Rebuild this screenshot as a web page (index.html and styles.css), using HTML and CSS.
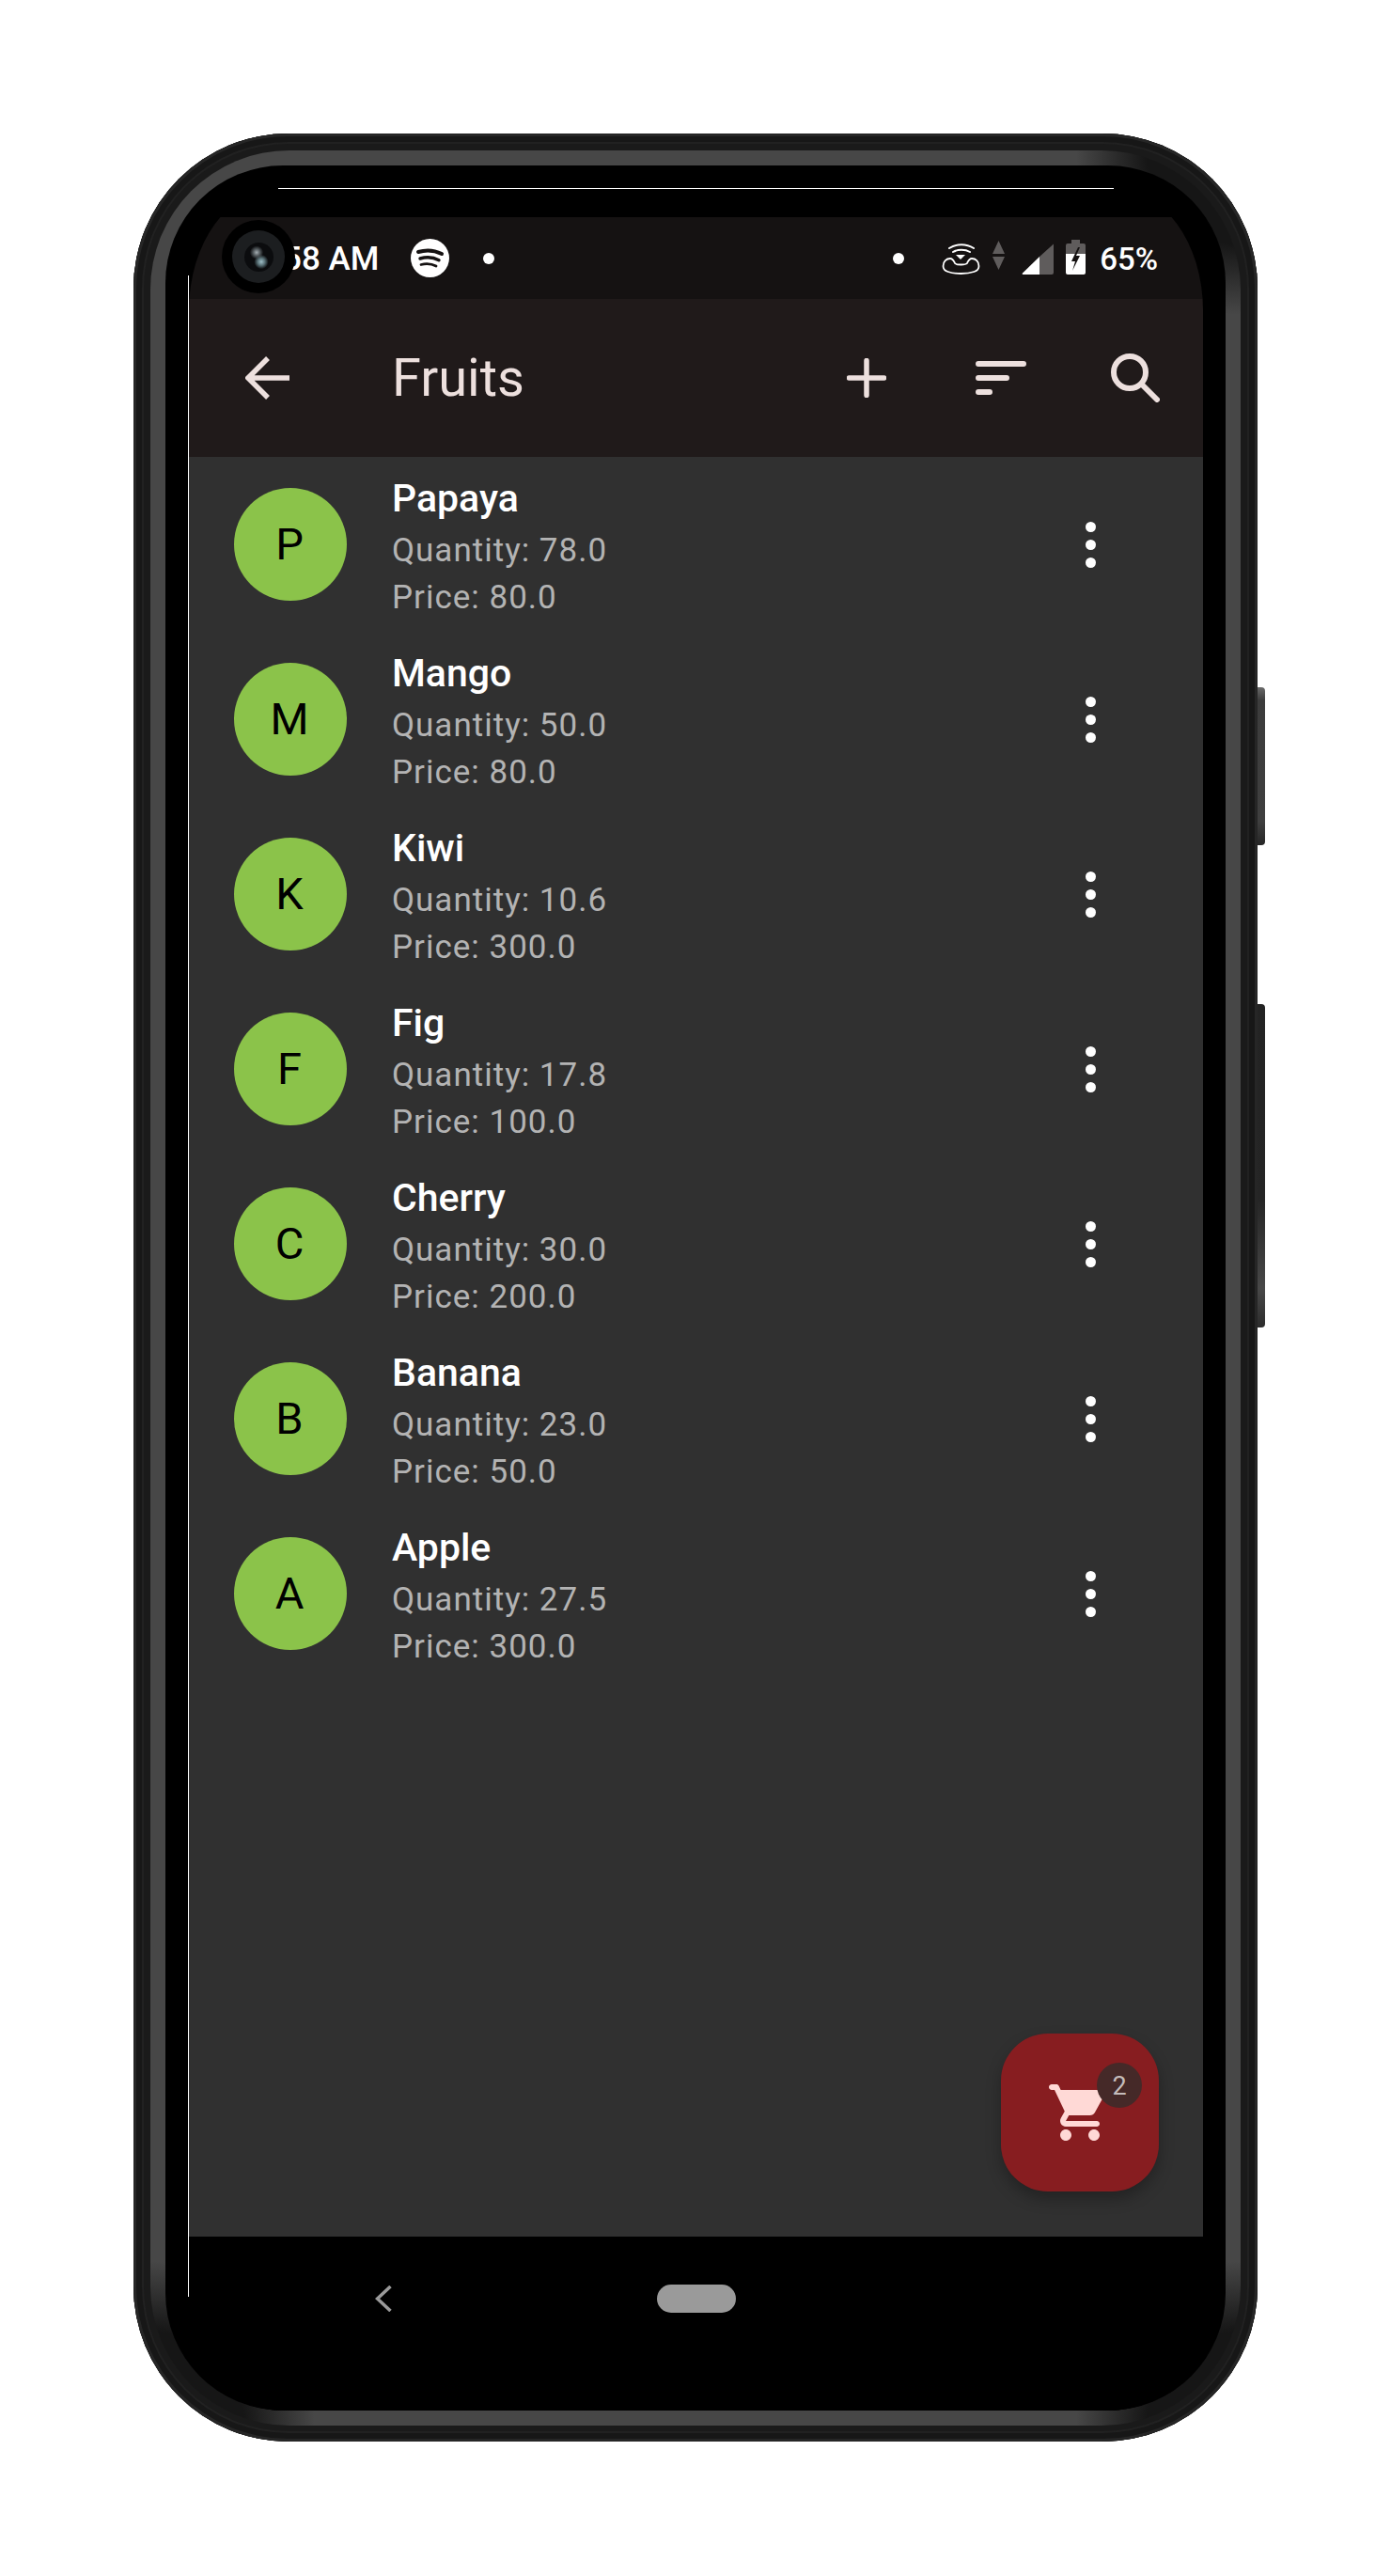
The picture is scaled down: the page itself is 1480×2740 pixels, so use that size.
FILE: index.html
```html
<!DOCTYPE html>
<html lang="en">
<head>
    <meta charset="UTF-8">
    <title>Fruits</title>
    <link rel="stylesheet" href="styles.css">
</head>
<body>

    <div class="phone">
        <div class="side-btn side-btn-power"></div>
        <div class="side-btn side-btn-volume"></div>

        <div class="bevel">
            <div class="bezel">
                <div class="edge-line edge-top"></div>
                <div class="edge-line edge-left"></div>

                <div class="screen">
                    <div class="status-bar">
                        <span class="status-time">8:58 AM</span>
                        <svg class="spotify" width="41" height="41" viewBox="0 0 41 41">
                            <circle cx="20.5" cy="20.5" r="20.5" fill="#fff"/>
                            <path d="M8 14c8-2.500 17-2 25 2" stroke="#151212" stroke-width="4" stroke-linecap="round" fill="none"/>
                            <path d="M10 21c7-2 14-1.500 20 1.800" stroke="#151212" stroke-width="3.400" stroke-linecap="round" fill="none"/>
                            <path d="M11 27.500c6-1.500 11-1 16 1.600" stroke="#151212" stroke-width="2.800" stroke-linecap="round" fill="none"/>
                        </svg>
                        <span class="status-dot"></span>
                        <span class="status-dot status-dot-right"></span>
                        <svg class="wifi-call" width="41" height="36" viewBox="0 0 41 36">
                            <path d="M8 7c8-5 18-5 26 0M12 11c5-3 13-3 18 0" stroke="#fff" stroke-width="2" stroke-linecap="round" fill="none"/>
                            <path d="M15 14h10l-5 5z" fill="#fff"/>
                            <path d="M1.500 26c0-5 3.500-8 7.500-8 3 0 4 3 5 5 1 1.200 3.500 1.500 6.500 1.500s5.500-.3 6.500-1.500c1-2 2-5 5-5 4 0 7.500 3 7.500 8 0 3-2 5-5 6-3 1-8 2-14 2s-11-1-14-2c-3-1-5-3-5-6z" stroke="#fff" stroke-width="1.800" fill="none"/>
                        </svg>
                        <svg class="net-arrows" width="13" height="31" viewBox="0 0 13 31">
                            <path d="M6.500 0L13 14H0zM0 17h13L6.500 31z" fill="#5f5c5c"/>
                        </svg>
                        <svg class="signal" width="34" height="34" viewBox="0 0 34 34">
                            <path d="M34 1.500V32q0 2-2 2H19V15z" fill="#5f5c5c"/>
                            <path d="M19 15V34H1.500q-1.500 0-.5-1.500z" fill="#fff"/>
                        </svg>
                        <svg class="battery" width="21" height="37" viewBox="0 0 21 37">
                            <path d="M6 0h9v4h4q2 0 2 2v10H0V6q0-2 2-2h4z" fill="#5f5c5c"/>
                            <path d="M0 15h21v20q0 2-2 2H2q-2 0-2-2z" fill="#fff"/>
                            <path d="M13 8L6 23h4L7 33l8-16h-4l4-9z" fill="#151212"/>
                        </svg>
                        <span class="status-percent">65%</span>
                    </div>

                    <div class="app-bar">
                        <div class="bar-slot bar-slot-back">
                            <svg width="49" height="48" viewBox="0 0 49 48">
                                <path d="M47 24H4M24 3L3 24l21 21" stroke="#ede0de" stroke-width="5.500" fill="none"/>
                            </svg>
                        </div>
                        <div class="app-title">Fruits</div>
                        <div class="bar-slot">
                            <svg width="42" height="42" viewBox="0 0 42 42">
                                <path d="M21 2.500v37M2.500 21h37" stroke="#ede0de" stroke-width="5.500" stroke-linecap="round" fill="none"/>
                            </svg>
                        </div>
                        <div class="bar-slot">
                            <svg width="54" height="36" viewBox="0 0 54 36">
                                <path d="M3 3h48M3 18h30M3 33h12" stroke="#ede0de" stroke-width="6" stroke-linecap="round" fill="none"/>
                            </svg>
                        </div>
                        <div class="bar-slot">
                            <svg width="52" height="52" viewBox="0 0 52 52">
                                <circle cx="20" cy="20" r="17" stroke="#ede0de" stroke-width="6" fill="none"/>
                                <path d="M33 33l16 16" stroke="#ede0de" stroke-width="6" stroke-linecap="round"/>
                            </svg>
                        </div>
                    </div>

                    <div class="fruit-list">
                        <div class="fruit-row">
                            <div class="avatar">P</div>
                            <div class="fruit-info">
                                <div class="fruit-name">Papaya</div>
                                <div class="fruit-meta">Quantity: 78.0</div>
                                <div class="fruit-meta">Price: 80.0</div>
                            </div>
                            <div class="more"><span></span><span></span><span></span></div>
                        </div>
                        <div class="fruit-row">
                            <div class="avatar">M</div>
                            <div class="fruit-info">
                                <div class="fruit-name">Mango</div>
                                <div class="fruit-meta">Quantity: 50.0</div>
                                <div class="fruit-meta">Price: 80.0</div>
                            </div>
                            <div class="more"><span></span><span></span><span></span></div>
                        </div>
                        <div class="fruit-row">
                            <div class="avatar">K</div>
                            <div class="fruit-info">
                                <div class="fruit-name">Kiwi</div>
                                <div class="fruit-meta">Quantity: 10.6</div>
                                <div class="fruit-meta">Price: 300.0</div>
                            </div>
                            <div class="more"><span></span><span></span><span></span></div>
                        </div>
                        <div class="fruit-row">
                            <div class="avatar">F</div>
                            <div class="fruit-info">
                                <div class="fruit-name">Fig</div>
                                <div class="fruit-meta">Quantity: 17.8</div>
                                <div class="fruit-meta">Price: 100.0</div>
                            </div>
                            <div class="more"><span></span><span></span><span></span></div>
                        </div>
                        <div class="fruit-row">
                            <div class="avatar">C</div>
                            <div class="fruit-info">
                                <div class="fruit-name">Cherry</div>
                                <div class="fruit-meta">Quantity: 30.0</div>
                                <div class="fruit-meta">Price: 200.0</div>
                            </div>
                            <div class="more"><span></span><span></span><span></span></div>
                        </div>
                        <div class="fruit-row">
                            <div class="avatar">B</div>
                            <div class="fruit-info">
                                <div class="fruit-name">Banana</div>
                                <div class="fruit-meta">Quantity: 23.0</div>
                                <div class="fruit-meta">Price: 50.0</div>
                            </div>
                            <div class="more"><span></span><span></span><span></span></div>
                        </div>
                        <div class="fruit-row">
                            <div class="avatar">A</div>
                            <div class="fruit-info">
                                <div class="fruit-name">Apple</div>
                                <div class="fruit-meta">Quantity: 27.5</div>
                                <div class="fruit-meta">Price: 300.0</div>
                            </div>
                            <div class="more"><span></span><span></span><span></span></div>
                        </div>

                        <div class="cart-fab">
                            <svg width="72" height="72" viewBox="0 0 24 24">
                                <path fill="#ffd9d6" d="M7 18c-1.100 0-1.990.9-1.990 2S5.900 22 7 22s2-.9 2-2-.9-2-2-2zM1 3c0 .55.45 1 1 1h1l3.600 7.590-1.350 2.440C4.520 15.370 5.480 17 7 17h11c.55 0 1-.45 1-1s-.45-1-1-1H7l1.100-2h7.450c.75 0 1.410-.41 1.750-1.030l3.580-6.490c.37-.66-.11-1.480-.87-1.480H5.210l-.67-1.430c-.16-.35-.52-.57-.9-.57H2c-.55 0-1 .45-1 1zm16 15c-1.100 0-1.990.9-1.990 2s.89 2 1.990 2 2-.9 2-2-.9-2-2-2z"/>
                            </svg>
                            <span class="cart-badge">2</span>
                        </div>
                    </div>

                    <div class="nav-bar">
                        <svg class="nav-back" width="18" height="28" viewBox="0 0 18 28">
                            <path d="M16.500 1L2.500 14l14 13" stroke="#9a9a9a" stroke-width="3.500" fill="none"/>
                        </svg>
                        <div class="nav-pill"></div>
                    </div>
                </div>
            </div>
        </div>

        <div class="camera"><div class="lens"><div class="lens-core"></div></div></div>
    </div>

</body>
</html>
```
FILE: styles.css
```css
body {
    margin: 0;
    min-height: 2740px;
    background-color: #ffffff;
    font-family: Roboto, "Liberation Sans", sans-serif;
}

/* phone body, three nested rings */
.phone {
    position: relative;
    box-sizing: border-box;
    width: 1196px;
    margin: 142px 0 0 142px;
    padding: 18px 18px 17px;
    background-color: #1a1a1a;
    border-radius: 165px;
    box-shadow: inset 0 0 0 3px #262626, inset 0 0 0 9px #171717, inset 0 0 0 11px #212121;
}
.bevel {
    padding: 16px;
    background:
        radial-gradient(circle at 100% 0, #161616 100px, transparent 175px),
        radial-gradient(circle at 0 100%, #161616 100px, transparent 175px),
        radial-gradient(circle at 100% 100%, #161616 100px, transparent 175px),
        #474747;
    border-radius: 148px;
}
.bezel {
    position: relative;
    padding: 24px 24px 0 25px;
    background-color: #000000;
    border-radius: 125px;
}
.edge-line {
    position: absolute;
    background-color: #ffffff;
}
.edge-top {
    top: 24px;
    left: 120px;
    width: 889px;
    height: 1px;
}
.edge-left {
    top: 117px;
    left: 24px;
    width: 1px;
    height: 2150px;
}
.side-btn {
    position: absolute;
    left: 100%;
    width: 8px;
    border-radius: 0 4px 4px 0;
}
.side-btn-power {
    top: 589px;
    height: 168px;
    background: linear-gradient(#6a6a6a 0, #3c3c3c 14px, #3f3f3f 85%, #262626 100%);
}
.side-btn-volume {
    top: 926px;
    height: 344px;
    background: linear-gradient(#232323 0, #252525 60%, #484848 88%, #2c2c2c 100%);
}

/* hole punch */
.camera {
    position: absolute;
    top: 92px;
    left: 94px;
    display: flex;
    justify-content: center;
    align-items: center;
    width: 78px;
    height: 78px;
    background-color: #000000;
    border-radius: 50%;
}
.lens {
    display: flex;
    justify-content: center;
    align-items: center;
    width: 56px;
    height: 56px;
    background-color: #1c1e20;
    border-radius: 50%;
}
.lens-core {
    width: 31px;
    height: 31px;
    border-radius: 50%;
    background:
        radial-gradient(circle at 42% 34%, #a5aeb2 0, #596064 12%, transparent 26%),
        radial-gradient(circle at 58% 66%, #9fc0c8 0, #5a7278 14%, transparent 28%),
        #0b0c0e;
}

.screen {
    display: flex;
    flex-direction: column;
    padding-top: 31px;
    background-color: #000000;
    border-radius: 95px 95px 100px 100px / 130px 130px 100px 100px;
    overflow: hidden;
}

.status-bar {
    display: flex;
    align-items: center;
    height: 87px;
    padding: 0 48px 0 71px;
    background-color: #151212;
    color: #ffffff;
}
.status-time {
    padding-top: 2px;
    font-size: 35px;
    font-weight: 500;
    white-space: nowrap;
}
.spotify {
    margin-left: 34px;
}
.status-dot {
    width: 12px;
    height: 12px;
    margin-left: 36px;
    background-color: #ffffff;
    border-radius: 50%;
}
.status-dot-right {
    margin-left: auto;
}
.wifi-call {
    margin-left: 40px;
}
.net-arrows {
    margin-left: 13px;
    margin-top: -6px;
}
.signal {
    margin-left: 18px;
}
.battery {
    margin-left: 13px;
    margin-top: -2px;
}
.status-percent {
    margin-left: 15px;
    padding-top: 2px;
    font-size: 33px;
    font-weight: 500;
}

.app-bar {
    display: flex;
    align-items: center;
    height: 168px;
    padding: 0 1px 0 12px;
    background-color: #201a1a;
}
.bar-slot {
    display: flex;
    justify-content: center;
    align-items: center;
    width: 143px;
    flex: none;
}
.bar-slot-back {
    width: 144px;
}
.app-title {
    flex: 1;
    margin-left: 60px;
    color: #ede0de;
    font-size: 56px;
}

.fruit-list {
    position: relative;
    height: 1893px;
    background-color: #303030;
}
.fruit-row {
    display: flex;
    align-items: center;
    height: 186px;
    padding: 0 108px 0 48px;
}
.avatar {
    display: flex;
    justify-content: center;
    align-items: center;
    flex: none;
    box-sizing: border-box;
    width: 120px;
    height: 120px;
    padding: 0 2px 2px 0;
    background-color: #8bc34a;
    border-radius: 50%;
    color: #000000;
    font-size: 47px;
}
.fruit-info {
    flex: 1;
    margin-left: 48px;
    padding-top: 3px;
}
.fruit-name {
    color: #ffffff;
    font-size: 41px;
    font-weight: 500;
    line-height: 61px;
}
.fruit-meta {
    color: #b3b3b3;
    font-size: 35px;
    letter-spacing: 1px;
    line-height: 50px;
}
.more {
    display: flex;
    flex-direction: column;
    align-items: center;
    gap: 8px;
    width: 24px;
}
.more span {
    width: 11px;
    height: 11px;
    background-color: #ffffff;
    border-radius: 50%;
}

.cart-fab {
    position: absolute;
    right: 47px;
    bottom: 48px;
    display: flex;
    justify-content: center;
    align-items: center;
    width: 168px;
    height: 168px;
    background-color: #871d20;
    border-radius: 50px;
    box-shadow: 0 8px 16px rgba(0, 0, 0, 0.28);
}
.cart-badge {
    position: absolute;
    top: 31px;
    right: 18px;
    width: 48px;
    height: 48px;
    background-color: #452928;
    border-radius: 50%;
    color: #c4bcbb;
    font-size: 27px;
    line-height: 50px;
    text-align: center;
}

.nav-bar {
    display: flex;
    align-items: center;
    height: 185px;
    padding: 0 0 0 198px;
    box-sizing: border-box;
    background-color: #000000;
}
.nav-back {
    margin-bottom: 54px;
}
.nav-pill {
    width: 84px;
    height: 30px;
    margin: 0 0 54px 282px;
    background-color: #9a9a9a;
    border-radius: 15px;
}
```
